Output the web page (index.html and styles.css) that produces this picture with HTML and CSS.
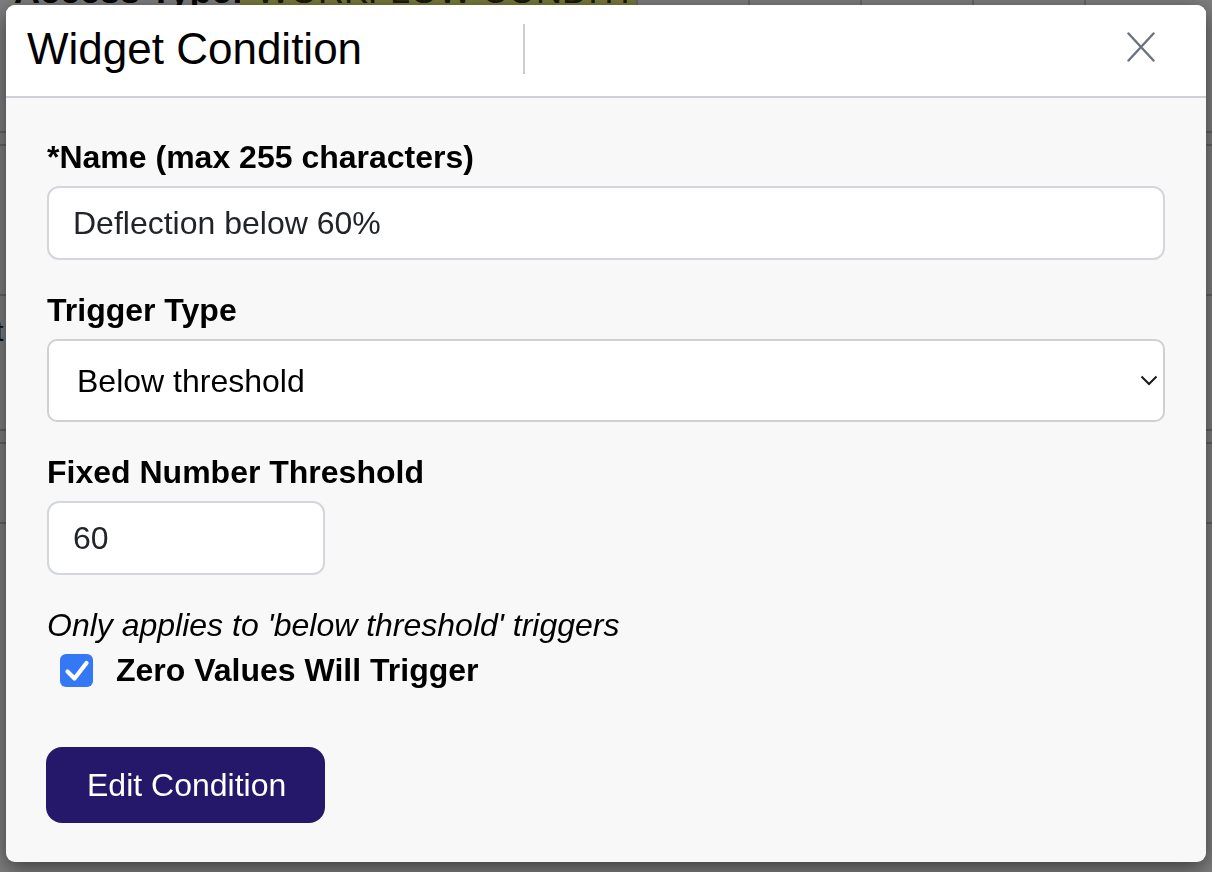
FILE: index.html
```html
<!DOCTYPE html>
<html lang="en">
<head>
<meta charset="utf-8">
<title>Widget Condition</title>
<link rel="stylesheet" href="styles.css">
</head>
<body>
<div class="page">
  <div class="page-top">
    <span class="access-label">Access Type:</span>
    <span class="access-badge">WORKFLOW CONDITION (1)</span>
    <div class="cells">
      <div class="cell"><span class="ico ico-i"></span><span class="ico ico-pen"></span></div>
      <div class="cell"><span class="ico ico-dots"></span><span class="ico ico-pen"></span></div>
      <div class="cell"><span class="ico ico-round"></span><span class="ico ico-pen"></span></div>
      <div class="cell"><span class="ico ico-round"></span><span class="ico ico-pen"></span></div>
      <div class="cell"><span class="ico ico-round"></span><span class="ico ico-pen"></span></div>
    </div>
  </div>
  <div class="page-rows">
    <div class="prow prow-a"></div>
    <div class="prow prow-b"></div>
    <div class="prow prow-c"><span class="plink">Title</span></div>
    <div class="prow prow-d"><span class="ptext">List</span></div>
    <div class="prow prow-b"></div>
    <div class="prow prow-e"></div>
  </div>
</div>

<div class="overlay">
  <div class="modal" role="dialog" aria-labelledby="modal-title">
    <div class="modal-header">
      <h2 class="modal-title" id="modal-title">Widget Condition</h2>
      <button class="close" type="button" aria-label="Close">
        <svg width="28" height="30" viewBox="0 0 28 30"><path d="M1.5 1.5 L26.5 28.5 M26.5 1.5 L1.5 28.5" stroke="#6c727e" stroke-width="2.4" stroke-linecap="round" fill="none"/></svg>
      </button>
    </div>
    <form class="modal-body">
      <div class="group">
        <label class="lbl" for="name">*Name (max 255 characters)</label>
        <input class="field" id="name" type="text" value="Deflection below 60%">
      </div>
      <div class="group">
        <label class="lbl" for="trigger">Trigger Type</label>
        <div class="select-wrap">
          <select class="select" id="trigger">
            <option>Below threshold</option>
            <option>Above threshold</option>
          </select>
          <svg class="chev" width="18" height="11" viewBox="0 0 18 11"><path d="M1.5 1.5 L9 9 L16.5 1.5" stroke="#1a1a1a" stroke-width="2" fill="none"/></svg>
        </div>
      </div>
      <div class="group">
        <label class="lbl" for="threshold">Fixed Number Threshold</label>
        <input class="field field-short" id="threshold" type="text" value="60">
      </div>
      <p class="note">Only applies to 'below threshold' triggers</p>
      <div class="check-row">
        <span class="check">
          <svg width="33" height="33" viewBox="0 0 33 33"><path d="M7.5 17.5 L14.5 24.5 L26.5 9" stroke="#fff" stroke-width="4.2" stroke-linecap="round" stroke-linejoin="round" fill="none"/></svg>
        </span>
        <span class="check-label">Zero Values Will Trigger</span>
      </div>
      <button class="btn" type="button">Edit Condition</button>
    </form>
  </div>
</div>
</body>
</html>
```

FILE: styles.css
```css
* { box-sizing: border-box; }

html, body {
  margin: 0;
  height: 100%;
}

body {
  font-family: "Liberation Sans", Arial, Helvetica, sans-serif;
  background: #ffffff;
  overflow: hidden;
}

/* ---------- background page (dimmed) ---------- */
.page {
  padding-left: 14px;
}

.page-top {
  display: flex;
  align-items: stretch;
  height: 44px;
  margin-top: -29px;
}

.access-label {
  font-size: 36px;
  font-weight: bold;
  line-height: 40px;
  color: #111;
  width: 226px;
  white-space: nowrap;
  overflow: hidden;
}

.access-badge {
  width: 396px;
  background: #f2f67c;
  color: #33360c;
  font-size: 36px;
  line-height: 40px;
  padding-left: 16px;
  white-space: nowrap;
  overflow: hidden;
}

.cells {
  display: flex;
  flex: 1;
}

.cell {
  width: 112px;
  border-left: 2px solid #d0d0d0;
  display: flex;
  align-items: flex-end;
  justify-content: space-around;
  padding-bottom: 30px;
}

.ico {
  display: block;
  width: 18px;
  height: 8px;
  background: #333;
  border-radius: 9px 9px 0 0;
}

.ico-pen {
  width: 4px;
  height: 14px;
  transform: rotate(40deg);
  border-radius: 0;
}

.ico-i { width: 4px; border-radius: 0; }
.ico-dots { width: 14px; height: 5px; }

.page-rows {
  margin-left: -14px;
}

.prow { border-bottom: 2px solid #c9c9c9; }
.prow-a { height: 118px; }
.prow-b { height: 13px; }
.prow-c { height: 150px; padding-top: 12px; }
.prow-d { height: 135px; padding-top: 20px; }
.prow-e { height: 80px; }

.plink {
  display: block;
  font-size: 28px;
  color: #1f4fa8;
  margin-left: -52px;
}

.ptext {
  display: block;
  font-size: 28px;
  color: #222;
  margin-left: -40px;
}

/* ---------- overlay + modal ---------- */
.overlay {
  position: fixed;
  inset: 0;
  background: rgba(0, 0, 0, 0.5);
  padding: 5px 6px 0 6px;
}

.modal {
  width: 1200px;
  height: 857px;
  background: #f8f8f8;
  border-radius: 9px;
  overflow: hidden;
  box-shadow: 0 6px 22px rgba(0, 0, 0, 0.55);
  display: flex;
  flex-direction: column;
}

.modal-header {
  flex: 0 0 93px;
  background: #ffffff;
  border-bottom: 2px solid #cdd1d7;
  display: flex;
  align-items: center;
  padding: 0 0 3px 21px;
}

.modal-title {
  margin: 0;
  width: 498px;
  height: 50px;
  line-height: 50px;
  font-size: 44px;
  font-weight: normal;
  color: #000;
  border-right: 2px solid #c9ccd1;
  white-space: nowrap;
}

.close {
  margin-left: auto;
  margin-right: 51px;
  margin-bottom: 5px;
  padding: 0;
  border: 0;
  background: none;
  display: flex;
  cursor: pointer;
}

.modal-body {
  margin: 0;
  padding: 39px 41px 40px 41px;
  display: flex;
  flex-direction: column;
  align-items: flex-start;
}

.group {
  width: 100%;
  margin-bottom: 30px;
}

.lbl {
  display: block;
  font-size: 32px;
  font-weight: bold;
  line-height: 40px;
  color: #000;
  margin-bottom: 9px;
}

.field {
  display: block;
  width: 100%;
  height: 74px;
  border: 2px solid #d3d7dc;
  border-radius: 12px;
  background: #fff;
  padding: 0 24px;
  font-family: inherit;
  font-size: 32px;
  color: #212529;
  outline: none;
}

.field-short { width: 278px; }

.select-wrap {
  position: relative;
  width: 100%;
}

.select {
  display: block;
  width: 100%;
  height: 83px;
  border: 2px solid #d0d0d0;
  border-radius: 10px;
  background: #fff;
  padding: 0 0 0 28px;
  font-family: inherit;
  font-size: 32px;
  color: #000;
  appearance: none;
  -webkit-appearance: none;
  outline: none;
}

.chev {
  position: absolute;
  right: 7px;
  top: 36px;
  pointer-events: none;
}

.note {
  margin: 0;
  font-size: 32px;
  font-style: italic;
  line-height: 40px;
  color: #000;
}

.check-row {
  display: flex;
  align-items: center;
  height: 40px;
  margin-top: 5px;
  padding-left: 13px;
}

.check {
  width: 33px;
  height: 33px;
  border-radius: 6px;
  background: #3478f6;
  display: flex;
}

.check-label {
  margin-left: 23px;
  font-size: 32px;
  font-weight: bold;
  color: #000;
}

.btn {
  margin-top: 57px;
  margin-left: -1px;
  width: 279px;
  height: 76px;
  border: 0;
  border-radius: 16px;
  background: #25186b;
  color: #fff;
  font-family: inherit;
  font-size: 32px;
  text-align: left;
  padding: 0 0 0 41px;
  cursor: pointer;
}
```
